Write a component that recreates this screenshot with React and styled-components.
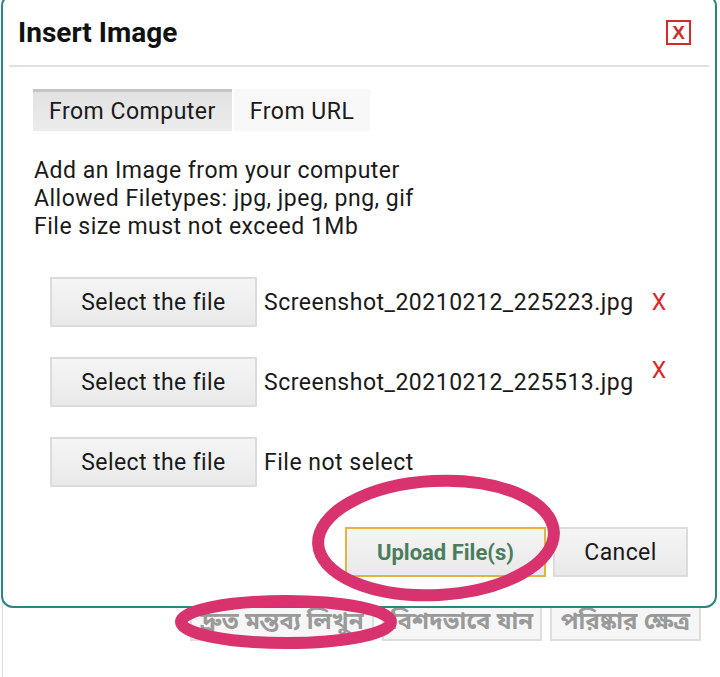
import React from "react";
import styled, { createGlobalStyle } from "styled-components";

const GlobalStyle = createGlobalStyle`
  html, body {
    margin: 0;
    padding: 0;
    background: #fff;
    font-family: Roboto, "Noto Sans", "Liberation Sans", sans-serif;
    color: #1a1a1a;
  }
  * { box-sizing: border-box; }
`;

const Page = styled.div`
  position: relative;
  width: 720px;
  height: 677px;
  overflow: hidden;
`;

const BackPage = styled.div`
  height: 100%;
  margin-left: 2px;
  border-left: 1px solid #dcdcdc;
  display: flex;
  align-items: flex-end;
  padding: 0 0 36px 187px;
`;

const BackBar = styled.div`
  display: flex;
  gap: 8px;
`;

const BackButton = styled.div`
  width: ${p => p.w}px;
  height: 50px;
  border: 2px solid #dedede;
  background: #f6f6f6;
  color: #9a9a9a;
  font-family: "Noto Sans Bengali", "Noto Sans", "DejaVu Sans", sans-serif;
  font-weight: 700;
  font-size: 24px;
  white-space: nowrap;
  display: flex;
  align-items: flex-end;
  justify-content: center;
  padding-bottom: 0;
`;

const Dialog = styled.div`
  position: absolute;
  top: -6px;
  left: 1px;
  width: 716px;
  height: 614px;
  background: #fff;
  border: 2.5px solid #2b8580;
  border-radius: 12px;
  display: flex;
  flex-direction: column;
`;

const Header = styled.div`
  height: 71px;
  margin: 0 6px;
  padding: 4px 18px 0 9px;
  border-bottom: 2px solid #e2e2e2;
  display: flex;
  align-items: center;
  justify-content: space-between;
`;

const Title = styled.h1`
  margin: 0;
  font-size: 28px;
  font-weight: 700;
  color: #111;
`;

const CloseBox = styled.div`
  width: 25px;
  height: 25px;
  border: 2px solid #d42a2a;
  color: #d42a2a;
  font-family: "Liberation Sans", sans-serif;
  font-weight: 700;
  font-size: 19px;
  display: flex;
  align-items: center;
  justify-content: center;
`;

const Body = styled.div`
  padding: 22px 27px 0 30px;
  display: flex;
  flex-direction: column;
  flex: 1;
`;

const Tabs = styled.div`
  display: flex;
  gap: 2px;
`;

const Tab = styled.div`
  height: 42px;
  padding: 0 16px;
  display: flex;
  align-items: center;
  font-size: 23px;
  letter-spacing: 0.5px;
  color: #1a1a1a;
  background: ${p => (p.active ? "linear-gradient(#e2e2e2, #ececec)" : "#f8f8f8")};
  border-top: 3px solid ${p => (p.active ? "#c4c4c4" : "#f8f8f8")};
`;

const Info = styled.div`
  margin: 26px 0 0 1px;
  font-size: 23px;
  letter-spacing: 0.5px;
  line-height: 28px;
  color: #1a1a1a;
`;

const FileList = styled.div`
  margin: 36px 0 0 17px;
  display: flex;
  flex-direction: column;
  gap: 30px;
`;

const FileRow = styled.div`
  display: flex;
  align-items: center;
  height: 50px;
`;

const GrayButton = styled.div`
  width: ${p => p.w}px;
  height: 50px;
  flex-shrink: 0;
  border: 2px solid #dcdcdc;
  background: linear-gradient(#f5f5f5, #e9e9e9);
  display: flex;
  align-items: center;
  justify-content: center;
  font-size: 23px;
  letter-spacing: 0.4px;
  color: #1a1a1a;
`;

const FileName = styled.span`
  margin-left: 7px;
  font-size: 23px;
  letter-spacing: 0.5px;
  color: #1a1a1a;
`;

const Remove = styled.span`
  margin-left: 18px;
  font-size: 23px;
  color: #e02424;
  position: relative;
  top: ${p => (p.raised ? -12 : 0)}px;
`;

const Footer = styled.div`
  margin-top: 40px;
  display: flex;
  justify-content: flex-end;
  gap: 7px;
`;

const UploadButton = styled(GrayButton)`
  border-color: #e2b443;
  color: #4b7d5c;
  font-weight: 700;
  font-size: 22px;
  letter-spacing: 0;
`;

const Marks = styled.svg`
  position: absolute;
  left: 0;
  top: 0;
  pointer-events: none;
`;

const files = [
  { name: "Screenshot_20210212_225223.jpg", remove: true },
  { name: "Screenshot_20210212_225513.jpg", remove: true, raised: true },
  { name: "File not select" },
];

export default function App() {
  return (
    <Page>
      <GlobalStyle />
      <BackPage>
        <BackBar>
          <BackButton w={184}>দ্রুত মন্তব্য লিখুন</BackButton>
          <BackButton w={160}>বিশদভাবে যান</BackButton>
          <BackButton w={151}>পরিষ্কার ক্ষেত্র</BackButton>
        </BackBar>
      </BackPage>

      <Dialog>
        <Header>
          <Title>Insert Image</Title>
          <CloseBox>X</CloseBox>
        </Header>
        <Body>
          <Tabs>
            <Tab active>From Computer</Tab>
            <Tab>From URL</Tab>
          </Tabs>
          <Info>
            Add an Image from your computer
            <br />
            Allowed Filetypes: jpg, jpeg, png, gif
            <br />
            File size must not exceed 1Mb
          </Info>
          <FileList>
            {files.map(f => (
              <FileRow key={f.name}>
                <GrayButton w={207}>Select the file</GrayButton>
                <FileName>{f.name}</FileName>
                {f.remove && <Remove raised={f.raised}>X</Remove>}
              </FileRow>
            ))}
          </FileList>
          <Footer>
            <UploadButton w={201}>Upload File(s)</UploadButton>
            <GrayButton w={135}>Cancel</GrayButton>
          </Footer>
        </Body>
      </Dialog>

      <Marks width="720" height="677" viewBox="0 0 720 677">
        <ellipse cx="436" cy="538" rx="118" ry="57" transform="rotate(-3 436 538)"
          fill="none" stroke="#d8336f" strokeWidth="12" />
        <ellipse cx="286" cy="622" rx="105" ry="21"
          fill="none" stroke="#d8336f" strokeWidth="12" />
      </Marks>
    </Page>
  );
}
